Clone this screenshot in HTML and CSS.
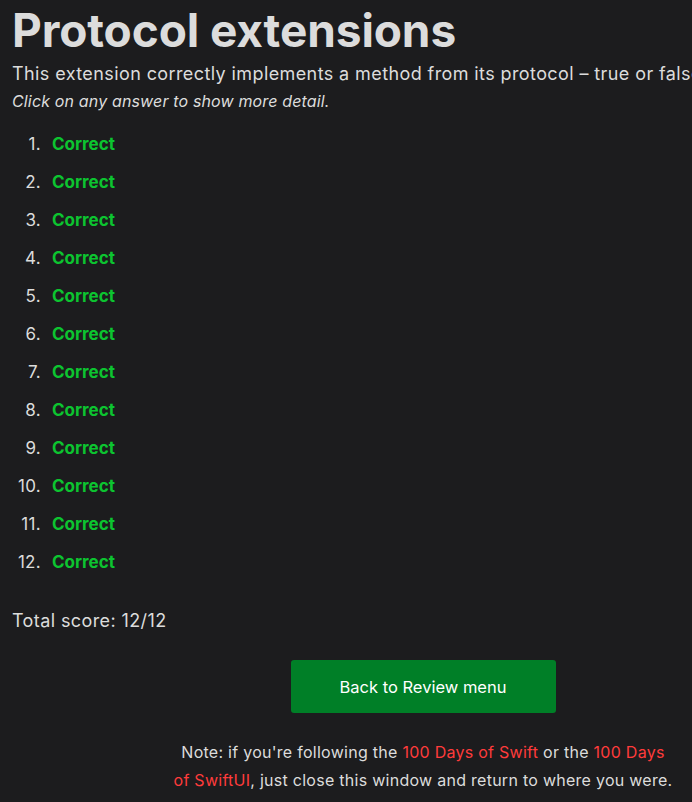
FILE: index.html
```html
<!DOCTYPE html>
<html lang="en">
<head>
<meta charset="utf-8">
<title>Protocol extensions</title>
<link rel="stylesheet" href="styles.css">
</head>
<body>
<main class="page">
  <h1 class="title">Protocol extensions</h1>
  <p class="question">This extension correctly implements a method from its protocol – true or false?</p>
  <p class="hint">Click on any answer to show more detail.</p>
  <ol class="answers">
    <li><span class="correct">Correct</span></li>
    <li><span class="correct">Correct</span></li>
    <li><span class="correct">Correct</span></li>
    <li><span class="correct">Correct</span></li>
    <li><span class="correct">Correct</span></li>
    <li><span class="correct">Correct</span></li>
    <li><span class="correct">Correct</span></li>
    <li><span class="correct">Correct</span></li>
    <li><span class="correct">Correct</span></li>
    <li><span class="correct">Correct</span></li>
    <li><span class="correct">Correct</span></li>
    <li><span class="correct">Correct</span></li>
  </ol>
  <p class="score">Total score: 12/12</p>
  <div class="actions">
    <a class="button" href="#">Back to Review menu</a>
  </div>
  <p class="note">Note: if you're following the <a href="#">100 Days of Swift</a> or the <a href="#">100 Days of SwiftUI</a>, just close this window and return to where you were.</p>
</main>
</body>
</html>
```
FILE: styles.css
```css
html, body {
  margin: 0;
  padding: 0;
  background: #1c1c1e;
  overflow: hidden;
}
body {
  color: #dcdcdc;
  font-family: Inter, "Noto Sans", sans-serif;
}
.page {
  width: 822px;
  margin-left: 12px;
}
.title {
  margin: 0;
  font-size: 46px;
  font-weight: 700;
  line-height: 60px;
  letter-spacing: -0.1px;
  color: #dcdcdc;
}
.question {
  margin: 0;
  font-size: 18px;
  line-height: 28px;
  letter-spacing: 0.4px;
  white-space: nowrap;
}
.hint {
  margin: 0;
  font-size: 16px;
  font-style: italic;
  line-height: 26px;
  letter-spacing: 0.15px;
}
.answers {
  list-style: none;
  margin: 11px 0 0;
  padding: 0;
  font-size: 17px;
  line-height: 38px;
  counter-reset: item;
}
.answers li {
  display: flex;
  counter-increment: item;
}
.answers li::before {
  content: counter(item) ".";
  width: 29px;
  margin-right: 11px;
  text-align: right;
  color: #dcdcdc;
  letter-spacing: 0.3px;
}
.correct {
  color: #0cc430;
  font-weight: 700;
}
.score {
  margin: 26px 0 0;
  font-size: 18px;
  line-height: 28px;
  letter-spacing: 0.4px;
}
.actions {
  display: flex;
  justify-content: center;
  margin-top: 25px;
}
.button {
  display: flex;
  align-items: center;
  justify-content: center;
  width: 265px;
  height: 53px;
  background: #007f27;
  color: #ffffff;
  border-radius: 3px;
  font-size: 16.5px;
  text-decoration: none;
}
.note {
  margin: 25px auto 0;
  width: 500px;
  text-align: center;
  font-size: 16px;
  line-height: 28px;
  letter-spacing: 0.27px;
}
.note a {
  color: #ff3b3b;
  text-decoration: none;
}
```
